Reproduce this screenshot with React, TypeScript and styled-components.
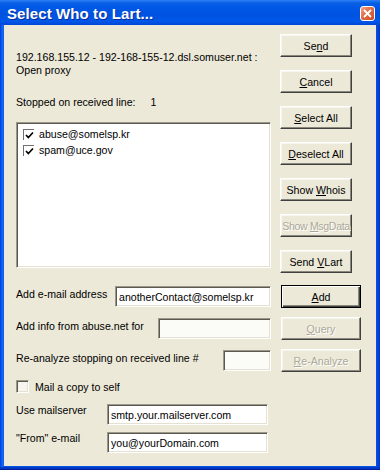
import React from 'react'
import styled, { createGlobalStyle, css } from 'styled-components'

const GlobalStyle = createGlobalStyle`
  html, body {
    margin: 0;
    padding: 0;
    background: #ECE9D8;
  }
  body {
    font-family: "Liberation Sans", Arial, sans-serif;
    font-size: 10.6px;
    color: #000;
  }
`

const addresses = ['abuse@somelsp.kr', 'spam@uce.gov']

const sideButtons = [
  { pre: 'Se', key: 'n', post: 'd' },
  { pre: '', key: 'C', post: 'ancel' },
  { pre: '', key: 'S', post: 'elect All' },
  { pre: '', key: 'D', post: 'eselect All' },
  { pre: 'Show ', key: 'W', post: 'hois' },
  { pre: 'Show ', key: 'M', post: 'sgData', disabled: true, tight: true },
  { pre: 'Send ', key: 'V', post: 'Lart' },
]

const App: React.FC = () => {
  return (
    <>
      <GlobalStyle />
      <StyledWindow>
        <StyledTitleBar>
          <StyledTitle>Select Who to Lart...</StyledTitle>
          <StyledClose>
            <svg width="9" height="9" viewBox="0 0 9 9">
              <path d="M1 1 L8 8 M8 1 L1 8" stroke="#fff" strokeWidth="1.8" />
            </svg>
          </StyledClose>
        </StyledTitleBar>

        <StyledClient>
          <StyledTop>
            <StyledLeft>
              <StyledInfo>
                192.168.155.12 - 192-168-155-12.dsl.somuser.net :<br />
                Open proxy
              </StyledInfo>
              <StyledStopped>
                <span>Stopped on received line:</span>
                <span>1</span>
              </StyledStopped>
              <StyledList>
                {addresses.map((a) => (
                  <StyledListItem key={a}>
                    <StyledListCheck>
                      <svg width="9" height="9" viewBox="0 0 9 9">
                        <path d="M1 4 L3.3 6.5 L8 1.5" fill="none" stroke="#000" strokeWidth="1.7" />
                      </svg>
                    </StyledListCheck>
                    {a}
                  </StyledListItem>
                ))}
              </StyledList>
            </StyledLeft>

            <StyledButtons>
              {sideButtons.map((b) => (
                <StyledButton key={b.pre + b.key + b.post} disabled={b.disabled} $tight={b.tight}>
                  {b.pre}
                  <u>{b.key}</u>
                  {b.post}
                </StyledButton>
              ))}
            </StyledButtons>
          </StyledTop>

          <StyledForm>
            <StyledRows>
              <StyledRow>
                <StyledLabel>Add e-mail address</StyledLabel>
                <StyledInput $width={156} value="anotherContact@somelsp.kr" readOnly />
                <StyledButton $wide $default>
                  <u>A</u>dd
                </StyledButton>
              </StyledRow>
              <StyledRow>
                <StyledLabel>Add info from abuse.net for</StyledLabel>
                <StyledInput $width={113} $dim readOnly />
                <StyledButton $wide disabled>
                  <u>Q</u>uery
                </StyledButton>
              </StyledRow>
              <StyledRow>
                <StyledLabel>Re-analyze stopping on received line #</StyledLabel>
                <StyledInput $width={48} $dim readOnly />
                <StyledButton $wide disabled>
                  <u>R</u>e-Analyze
                </StyledButton>
              </StyledRow>
            </StyledRows>

            <StyledCheckRow>
              <StyledCheckBox />
              Mail a copy to self
            </StyledCheckRow>

            <StyledFieldRow>
              <StyledFieldLabel>Use mailserver</StyledFieldLabel>
              <StyledInput $width={161} value="smtp.your.mailserver.com" readOnly />
            </StyledFieldRow>
            <StyledFieldRow $gap={7}>
              <StyledFieldLabel>"From" e-mail</StyledFieldLabel>
              <StyledInput $width={161} value="you@yourDomain.com" readOnly />
            </StyledFieldRow>
          </StyledForm>
        </StyledClient>
      </StyledWindow>
    </>
  )
}

const StyledWindow = styled.div`
  width: 380px;
  height: 470px;
  box-sizing: border-box;
  display: flex;
  flex-direction: column;
  background: linear-gradient(90deg, #0831D9 0, #0058EE 1px, #1C6BF0 3px, #0055E5 4px, #0055E5 376px, #0A49D8 377px, #0037C8 380px);
  padding: 0 4px 4px 4px;
  box-shadow: inset 0 -1px 0 #001C9A, inset 0 -3px 0 #0039C6;
`

const StyledTitleBar = styled.div`
  height: 25px;
  margin: 0 -4px;
  padding: 0 5px 0 7px;
  display: flex;
  align-items: center;
  justify-content: space-between;
  background: linear-gradient(180deg, #2E80F5 0%, #0A5FE6 12%, #0058E6 30%, #0053E0 60%, #0057E8 85%, #0047D6 100%);
`

const StyledTitle = styled.div`
  font-family: "Liberation Sans", Arial, sans-serif;
  font-weight: bold;
  font-size: 15px;
  color: #fff;
  text-shadow: 1px 1px 0 #0A2B9A;
  letter-spacing: 0.1px;
  padding-top: 1px;
`

const StyledClose = styled.div`
  width: 15px;
  height: 15px;
  box-sizing: border-box;
  border: 1px solid #fff;
  border-radius: 3px;
  background: linear-gradient(135deg, #F2A48A 0%, #E2714C 40%, #CC4A22 100%);
  display: flex;
  align-items: center;
  justify-content: center;
  margin-top: 2px;
`

const StyledClient = styled.div`
  flex: 1;
  background: #ECE9D8;
  display: flex;
  flex-direction: column;
`

const StyledTop = styled.div`
  display: flex;
  padding-left: 12px;
  gap: 9px;
`

const StyledLeft = styled.div`
  width: 255px;
  padding-top: 26px;
  display: flex;
  flex-direction: column;
`

const StyledInfo = styled.div`
  line-height: 13px;
`

const StyledStopped = styled.div`
  margin-top: 19px;
  line-height: 13px;
  display: flex;
  gap: 15px;
`

const sunken = css`
  box-sizing: border-box;
  border: 1px solid;
  border-color: #9A9888 #FFFFFF #FFFFFF #9A9888;
  box-shadow: inset 1px 1px 0 #5A5850, inset -1px -1px 0 #E4E1D2;
`

const StyledList = styled.div`
  ${sunken}
  margin-top: 13px;
  height: 146px;
  background: #fff;
  padding: 3px 0 0 6px;
`

const StyledListItem = styled.div`
  height: 16px;
  display: flex;
  align-items: center;
  gap: 5px;
`

const StyledListCheck = styled.div`
  width: 11px;
  height: 11px;
  box-sizing: border-box;
  border-top: 1px solid #707070;
  border-left: 1px solid #707070;
  display: flex;
  align-items: center;
  justify-content: center;
  padding: 1px 0 0 1px;
`

const StyledButtons = styled.div`
  padding-top: 9px;
  display: flex;
  flex-direction: column;
  gap: 13px;
`

const StyledButton = styled.button<{ $wide?: boolean; $default?: boolean; $tight?: boolean }>`
  width: ${(p) => (p.$wide ? 80 : 72)}px;
  height: 23px;
  flex-shrink: 0;
  padding: 0;
  white-space: nowrap;
  overflow: hidden;
  font-family: "Liberation Sans", Arial, sans-serif;
  font-size: 10.6px;
  letter-spacing: ${(p) => (p.$tight ? '-0.35px' : 'normal')};
  color: #000;
  background: #ECE9D8;
  border: 1px solid;
  border-color: #FFFFFF #404040 #404040 #FFFFFF;
  box-shadow: inset -1px -1px 0 #8A887C, inset 1px 1px 0 #F6F5EE;
  ${(p) =>
    p.$default &&
    css`
      border: 1px solid #000;
      box-shadow: inset 1px 1px 0 #fff, inset -1px -1px 0 #404040, inset -2px -2px 0 #8A887C;
    `}
  &:disabled {
    color: #ACA899;
    text-shadow: 1px 1px 0 #fff;
  }
`

const StyledForm = styled.div`
  padding-left: 12px;
  margin-top: 12px;
  display: flex;
  flex-direction: column;
`

const StyledRows = styled.div`
  width: 345px;
  display: flex;
  flex-direction: column;
  gap: 9px;
`

const StyledRow = styled.div`
  height: 23px;
  display: flex;
  align-items: center;
`

const StyledLabel = styled.div`
  flex: 1;
  line-height: 13px;
  margin-top: -4px;
`

const StyledInput = styled.input<{ $width: number; $dim?: boolean }>`
  ${sunken}
  width: ${(p) => p.$width}px;
  height: 21px;
  margin: 0 10px 0 0;
  padding: 1px 3px 0 3px;
  font-family: "Liberation Sans", Arial, sans-serif;
  font-size: 10.6px;
  color: #000;
  background: ${(p) => (p.$dim ? '#FBFBF7' : '#fff')};
  outline: none;
`

const StyledCheckRow = styled.div`
  margin-top: 8px;
  height: 13px;
  display: flex;
  align-items: center;
  gap: 6px;
`

const StyledCheckBox = styled.div`
  ${sunken}
  width: 13px;
  height: 13px;
  background: #F6F5F0;
`

const StyledFieldRow = styled.div<{ $gap?: number }>`
  margin-top: ${(p) => p.$gap ?? 11}px;
  display: flex;
  align-items: flex-start;
`

const StyledFieldLabel = styled.div`
  width: 91px;
  line-height: 13px;
`

export default App
